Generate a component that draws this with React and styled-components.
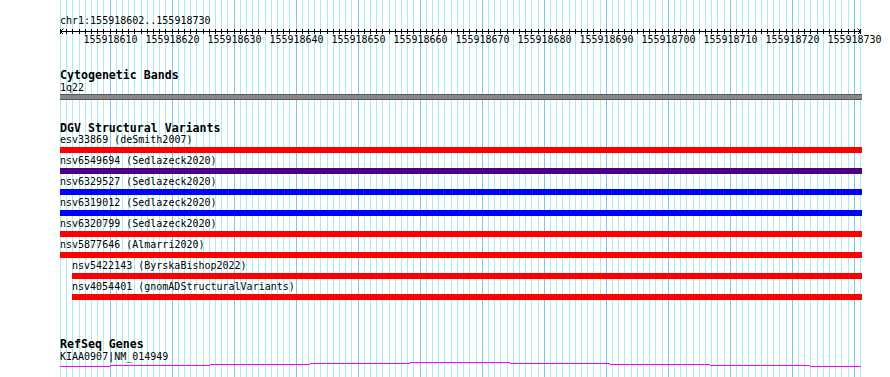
import React from 'react';
import styled, { createGlobalStyle } from 'styled-components';

/* browser constants */
const START = 155918602;
const BASES = 129;
const LEFT = 60;
const PX = 800 / BASES;

const GlobalStyle = createGlobalStyle`
  html, body { margin: 0; padding: 0; background: #fff; }
`;

const Canvas = styled.div`
  position: relative;
  width: 890px;
  height: 377px;
  overflow: hidden;
  background: #fff;
  font-family: "DejaVu Sans Mono", "Liberation Mono", monospace;
  font-size: 10px;
  color: #000;
`;

const Guides = styled.svg`
  position: absolute;
  left: 0;
  top: 0;
  z-index: 0;
`;

const Tracks = styled.div`
  position: relative;
  z-index: 1;
  display: flex;
  flex-direction: column;
  width: 802px;
  margin-left: ${LEFT}px;
  padding-top: 15px;
`;

const Label = styled.div`
  height: 12px;
  line-height: 12px;
  white-space: nowrap;
  padding-left: ${(p) => p.$indent || 0}px;
  margin-top: ${(p) => p.$gap || 0}px;
`;

const Title = styled.div`
  height: 12px;
  line-height: 12px;
  font-size: 11.6px;
  font-weight: bold;
  white-space: nowrap;
  margin-top: ${(p) => p.$gap}px;
`;

const Ruler = styled.svg`
  display: block;
`;

const Axis = styled.div`
  position: relative;
  height: 12px;
  line-height: 12px;
`;

const AxisNum = styled.span`
  position: absolute;
  top: 0;
  transform: translateX(-50%);
  white-space: nowrap;
`;

const BandBar = styled.div`
  height: 6px;
  box-sizing: border-box;
  background: #888;
  border-top: 1px solid #555;
  border-bottom: 1px solid #555;
`;

const Variants = styled.div`
  display: flex;
  flex-direction: column;
`;

const VariantRow = styled.div`
  height: 21px;
  display: flex;
  flex-direction: column;
`;

const Bar = styled.div`
  margin-top: 1px;
  margin-left: ${(p) => p.$indent || 0}px;
  height: 6px;
  background: ${(p) => p.$color};
`;

const GeneLine = styled.svg`
  display: block;
  margin-top: -2px;
`;

const variants = [
  { id: 'esv33869', src: 'deSmith2007', color: '#ff0000' },
  { id: 'nsv6549694', src: 'Sedlazeck2020', color: '#4b0082' },
  { id: 'nsv6329527', src: 'Sedlazeck2020', color: '#0000ff' },
  { id: 'nsv6319012', src: 'Sedlazeck2020', color: '#0000ff' },
  { id: 'nsv6320799', src: 'Sedlazeck2020', color: '#ff0000' },
  { id: 'nsv5877646', src: 'Almarri2020', color: '#ff0000' },
  { id: 'nsv5422143', src: 'ByrskaBishop2022', color: '#ff0000', indent: 12 },
  { id: 'nsv4054401', src: 'gnomADStructuralVariants', color: '#ff0000', indent: 12 },
];

// gene line drawn as gentle steps, y offsets inside the svg
const geneSteps = [
  [0, 50, 5], [50, 150, 4], [150, 250, 3], [250, 350, 2], [350, 450, 1],
  [450, 550, 2], [550, 650, 3], [650, 750, 4], [750, 801, 5],
];

function GuideLines() {
  const lines = [];
  for (let i = 0; i <= BASES; i++) {
    const x = Math.round(LEFT + i * PX);
    const dark = (START + i) % 10 === 0;
    lines.push(
      <rect key={i} x={x} y={0} width={1} height={377} fill={dark ? '#7ec8ee' : '#aaecef'} />
    );
  }
  return (
    <Guides width="890" height="377" shapeRendering="crispEdges">
      {lines}
    </Guides>
  );
}

function BaseRuler() {
  const ticks = [];
  for (let i = 0; i <= BASES; i++) {
    ticks.push(<rect key={i} x={Math.round(i * PX)} y={2} width={1} height={5} fill="#000" />);
  }
  return (
    <Ruler width="802" height="7">
      <g shapeRendering="crispEdges">
        <rect x={0} y={4} width={801} height={1} fill="#000" />
        {ticks}
      </g>
      <path d="M0.5 4.5 L3.5 1.5 M0.5 4.5 L3.5 7.5" stroke="#000" fill="none" />
      <path d="M800.5 4.5 L797.5 1.5 M800.5 4.5 L797.5 7.5" stroke="#000" fill="none" />
    </Ruler>
  );
}

function App() {
  const nums = [];
  for (let b = 155918610; b <= 155918730; b += 10) nums.push(b);

  return (
    <>
      <GlobalStyle />
      <Canvas>
        <GuideLines />
        <Tracks>
          <Label>chr1:155918602..155918730</Label>
          <BaseRuler />
          <Axis>
            {nums.map((b) => (
              <AxisNum key={b} style={{ left: Math.round((b - START) * PX) + 0.5 }}>
                {b}
              </AxisNum>
            ))}
          </Axis>

          <Title $gap={23}>Cytogenetic Bands</Title>
          <Label $gap={1}>1q22</Label>
          <BandBar />

          <Title $gap={22}>DGV Structural Variants</Title>
          <Variants>
            {variants.map((v) => (
              <VariantRow key={v.id}>
                <Label $indent={v.indent}>{v.id} ({v.src})</Label>
                <Bar $color={v.color} $indent={v.indent} />
              </VariantRow>
            ))}
          </Variants>

          <Title $gap={36}>RefSeq Genes</Title>
          <Label $gap={1}>KIAA0907|NM_014949</Label>
          <GeneLine width="802" height="7" shapeRendering="crispEdges">
            {geneSteps.map(([a, b, y]) => (
              <rect key={a} x={a} y={y} width={b - a} height={1} fill="#ff00ff" />
            ))}
          </GeneLine>
        </Tracks>
      </Canvas>
    </>
  );
}

export default App;
